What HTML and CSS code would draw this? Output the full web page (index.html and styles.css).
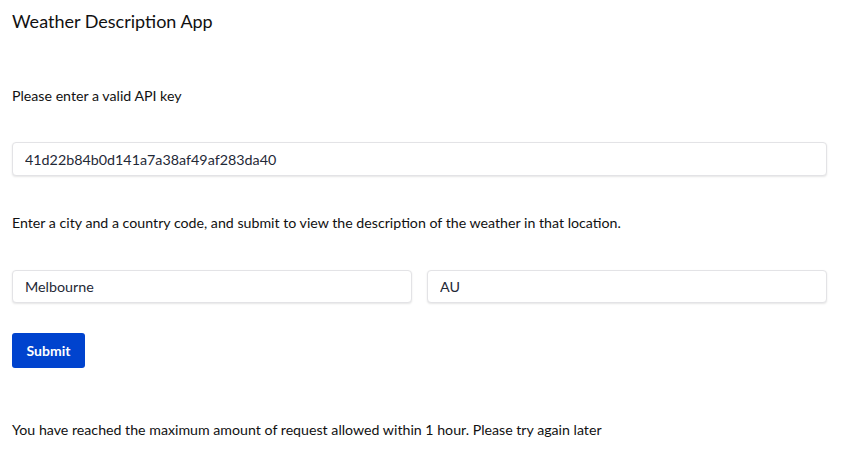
FILE: index.html
```html
<!DOCTYPE html>
<html lang="en">
<head>
<meta charset="utf-8">
<title>Weather Description App</title>
<link rel="stylesheet" href="styles.css">
</head>
<body>
<div class="app">
  <h1 class="title">Weather Description App</h1>
  <p class="label label-key">Please enter a valid API key</p>
  <input class="field field-key" type="text" value="41d22b84b0d141a7a38af49af283da40">
  <p class="label label-city">Enter a city and a country code, and submit to view the description of the weather in that location.</p>
  <div class="row">
    <input class="field" type="text" value="Melbourne">
    <input class="field" type="text" value="AU">
  </div>
  <button class="submit" type="button">Submit</button>
  <p class="label label-msg">You have reached the maximum amount of request allowed within 1 hour. Please try again later</p>
</div>
</body>
</html>
```

FILE: styles.css
```css
* { box-sizing: border-box; }
html, body { margin: 0; padding: 0; background: #fff; }
body {
  font-family: Lato, "Open Sans", "Liberation Sans", sans-serif;
  color: #111;
}
.app {
  width: 839px;
  padding: 0 12px;
  display: flex;
  flex-direction: column;
  align-items: flex-start;
}
.title {
  margin: 9px 0 0;
  font-size: 18px;
  font-weight: 400;
  line-height: 24px;
  color: #111;
}
.label {
  margin: 0;
  font-size: 14.2px;
  line-height: 20px;
  color: #111;
}
.label-key { margin-top: 53px; }
.field {
  display: block;
  width: 100%;
  height: 34px;
  padding: 0 12px;
  border: 1px solid #e3e3e6;
  border-radius: 4px;
  box-shadow: 0 1px 2px rgba(0,0,0,0.10);
  font-family: Lato, "Open Sans", "Liberation Sans", sans-serif;
  font-size: 14.3px;
  color: #1f2937;
  background: #fff;
  outline: none;
}
.field-key { margin-top: 36px; }
.label-city { margin-top: 37px; }
.row {
  margin-top: 37px;
  width: 100%;
  display: grid;
  grid-template-columns: 1fr 1fr;
  gap: 15px;
}
.row .field { height: 33px; }
.submit {
  margin-top: 30px;
  width: 73px;
  height: 35px;
  border: none;
  border-radius: 3px;
  background: #0043ce;
  color: #fff;
  font-family: Lato, "Open Sans", "Liberation Sans", sans-serif;
  font-size: 14px;
  font-weight: 700;
  padding: 0;
}
.label-msg { margin-top: 52px; }
```
